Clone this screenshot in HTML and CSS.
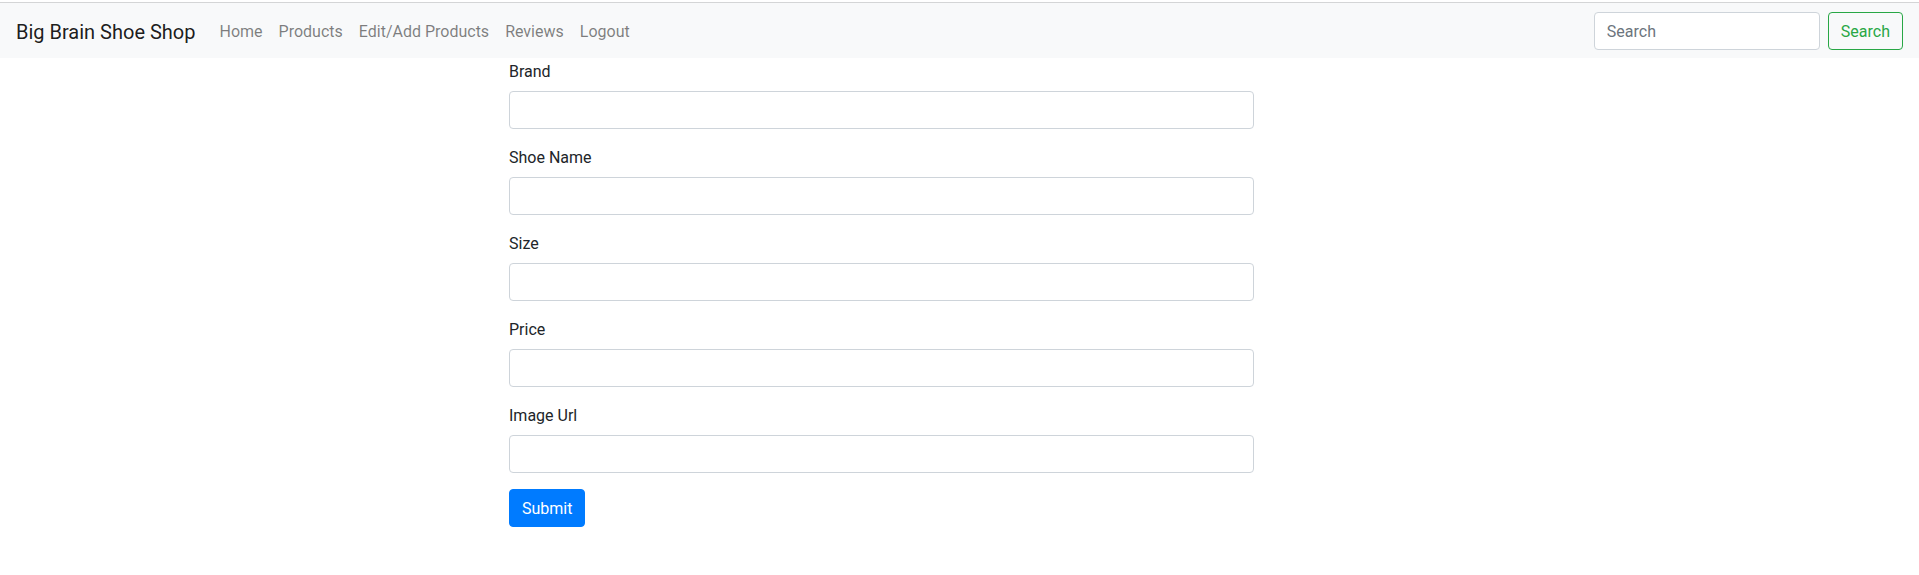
FILE: index.html
```html
<!DOCTYPE html>
<html lang="en">
<head>
<meta charset="utf-8">
<title>Big Brain Shoe Shop</title>
<link rel="stylesheet" href="styles.css">
</head>
<body>
<nav class="navbar">
  <a class="brand" href="#">Big Brain Shoe Shop</a>
  <ul class="nav-links">
    <li><a href="#">Home</a></li>
    <li><a href="#">Products</a></li>
    <li><a href="#">Edit/Add Products</a></li>
    <li><a href="#">Reviews</a></li>
    <li><a href="#">Logout</a></li>
  </ul>
  <form class="search-form">
    <input class="search-input" type="search" placeholder="Search">
    <button class="btn btn-outline-success" type="button">Search</button>
  </form>
</nav>
<main class="page">
  <form class="product-form">
    <div class="form-group">
      <label>Brand</label>
      <input class="form-control" type="text">
    </div>
    <div class="form-group">
      <label>Shoe Name</label>
      <input class="form-control" type="text">
    </div>
    <div class="form-group">
      <label>Size</label>
      <input class="form-control" type="text">
    </div>
    <div class="form-group">
      <label>Price</label>
      <input class="form-control" type="text">
    </div>
    <div class="form-group">
      <label>Image Url</label>
      <input class="form-control" type="text">
    </div>
    <button class="btn btn-primary" type="button">Submit</button>
  </form>
</main>
</body>
</html>
```
FILE: styles.css
```css
* { box-sizing: border-box; }
html, body {
  margin: 0;
  padding: 0;
  background: #fff;
}
body {
  font-family: Roboto, "Noto Sans", Arial, sans-serif;
  font-size: 16px;
  line-height: 1.5;
  color: #212529;
  padding-top: 2px;
}
.navbar {
  display: flex;
  align-items: center;
  height: 56px;
  padding: 0 16px;
  background: #f8f9fa;
  border-top: 1px solid #d4d5d6;
}
.brand {
  font-size: 20px;
  line-height: 30px;
  padding: 6px 0 4px;
  margin-right: 16px;
  color: rgba(0,0,0,.9);
  text-decoration: none;
  white-space: nowrap;
}
.nav-links {
  display: flex;
  list-style: none;
  margin: 0;
  padding: 0;
  flex: 1;
}
.nav-links a {
  display: block;
  padding: 9px 8px 7px;
  color: rgba(0,0,0,.5);
  text-decoration: none;
}
.search-form {
  display: flex;
  align-items: center;
}
.search-input {
  width: 226px;
  height: 38px;
  margin-right: 8px;
  padding: 7px 12px 5px;
  font: inherit;
  color: #495057;
  background: #fff;
  border: 1px solid #ced4da;
  border-radius: 4px;
}
.search-input::placeholder { color: #6c757d; }
.btn {
  display: inline-block;
  height: 38px;
  padding: 7px 12px 5px;
  font: inherit;
  line-height: 1.5;
  border: 1px solid transparent;
  border-radius: 4px;
  cursor: pointer;
}
.btn-outline-success {
  color: #28a745;
  border-color: #28a745;
  background: transparent;
}
.btn-primary {
  color: #fff;
  background: #007bff;
  border-color: #007bff;
}
.page {
  padding-top: 1px;
  padding-left: 509px;
}
.product-form {
  width: 745px;
}
.form-group {
  margin-bottom: 16px;
}
.form-group label {
  display: inline-block;
  padding-top: 1px;
  margin-bottom: 7px;
}
.form-control {
  display: block;
  width: 100%;
  height: 38px;
  padding: 6px 12px;
  font: inherit;
  color: #495057;
  background: #fff;
  border: 1px solid #ced4da;
  border-radius: 4px;
}
```
